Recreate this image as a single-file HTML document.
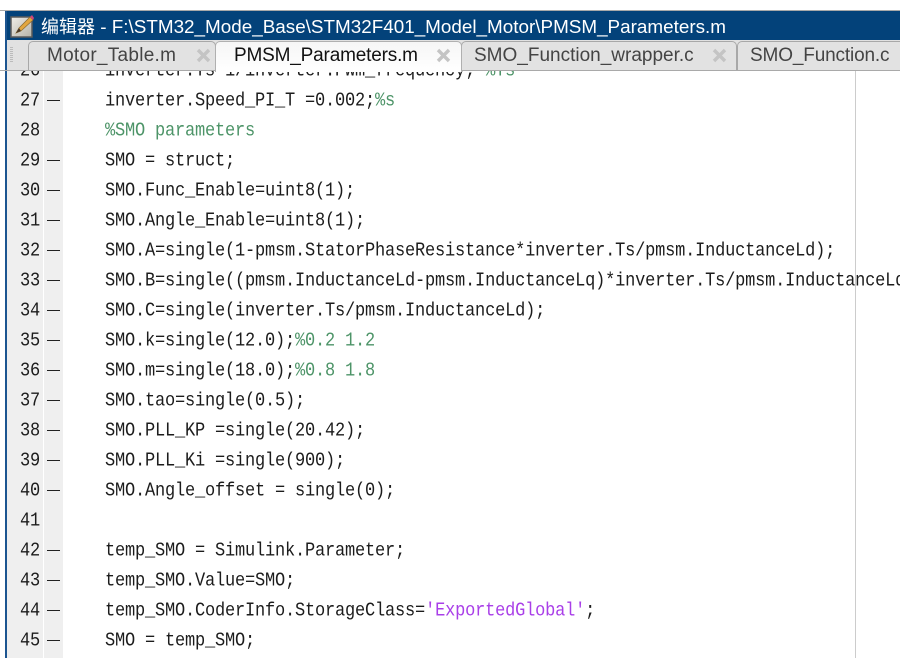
<!DOCTYPE html>
<html><head><meta charset="utf-8">
<style>
html,body{margin:0;padding:0;background:#fff}
#p{position:relative;width:900px;height:658px;overflow:hidden;background:#fff}
#p div{position:absolute}
.l,.n{font-family:"Liberation Mono",monospace;font-size:17px;letter-spacing:-.2px;line-height:30px;height:30px;white-space:pre;color:#1c1c1c;margin-top:2px;transform:scaleY(1.15);transform-origin:50% 50%}
.l{left:105px}
.n{left:20px}
.d{left:47px;width:13px;height:1px;background:#222}
.c{color:#4d9468}
.s{color:#a93fe8}
.t{font-family:"Liberation Sans",sans-serif;font-size:19px;line-height:30px;top:41px;white-space:pre;color:#444}
.tab{top:41px;height:29px;border:1px solid #a8a8a8;border-bottom:none;border-radius:5px 5px 0 0;box-sizing:content-box}
</style></head><body><div id="p">
<div style="left:0;top:10px;width:900px;height:1px;background:#a9a9a9"></div>
<div style="left:5px;top:11px;width:2px;height:647px;background:#1c5590"></div>
<div style="left:7px;top:11px;width:893px;height:29px;background:#03427a"></div>
<svg style="position:absolute;left:10px;top:14px" width="24" height="24" viewBox="0 0 24 24"><defs><linearGradient id="g" x1="0" y1="0" x2="1" y2="1"><stop offset="0" stop-color="#f0eee8"/><stop offset="1" stop-color="#b5b2a8"/></linearGradient></defs><rect x="1" y="3" width="21" height="20" fill="url(#g)" stroke="#5a5a5a" stroke-width="1.5"/><path d="M6 19 L9 14 L20 3 L23 6 L11 17 Z" fill="#e2a63f" stroke="#8a6a30" stroke-width=".7"/><path d="M20 3 L23 6 L24 4 L22 1 Z" fill="#d0457a"/><path d="M6 19 L9 14 L11 17 Z" fill="#4a3a2a"/></svg>
<div style="left:41px;top:12px;height:29px;line-height:29px;color:#fff;font-size:18px;font-family:'Liberation Sans','Noto Sans CJK SC',sans-serif;white-space:pre">编辑器<span style="font-size:18.87px"> - F:\STM32_Mode_Base\STM32F401_Model_Motor\PMSM_Parameters.m</span></div>

<div style="left:7px;top:40px;width:893px;height:30px;background:#e1e1e1"></div>
<div style="left:0;top:70px;width:900px;height:1px;background:#a9a9a9;z-index:3"></div>
<div style="left:10px;top:47px;width:3px;height:16px;background:repeating-linear-gradient(#bbb 0 1px,#e1e1e1 1px 2px)"></div>
<div class="tab" style="left:28px;width:186px;background:#e2e2e2"></div>
<div class="tab" style="left:215px;width:245px;height:30px;background:linear-gradient(#f6f6f6,#fff);z-index:4;border-color:#b0b0b0"></div>
<div class="tab" style="left:461px;width:274px;background:#e2e2e2"></div>
<div class="tab" style="left:737px;width:170px;background:#e2e2e2"></div>
<div class="t" style="left:47px;letter-spacing:.27px">Motor_Table.m</div>
<div class="t" style="left:234px;color:#111;z-index:5;letter-spacing:-.18px">PMSM_Parameters.m</div>
<div class="t" style="left:474px">SMO_Function_wrapper.c</div>
<div class="t" style="left:750px;letter-spacing:-.15px">SMO_Function.c</div>
<svg style="position:absolute;left:196px;top:48px;z-index:5" width="15" height="15"><path d="M2 2L13 13M13 2L2 13" stroke="#c4c4c4" stroke-width="3.4"/></svg>
<svg style="position:absolute;left:436px;top:48px;z-index:5" width="15" height="15"><path d="M2 2L13 13M13 2L2 13" stroke="#c4c4c4" stroke-width="3.4"/></svg>
<svg style="position:absolute;left:712px;top:48px;z-index:5" width="15" height="15"><path d="M2 2L13 13M13 2L2 13" stroke="#c4c4c4" stroke-width="3.4"/></svg>

<div style="left:7px;top:71px;width:36px;height:587px;background:#efefef"></div>
<div style="left:44px;top:71px;width:19px;height:587px;background:#efefef"></div>
<div style="left:855px;top:71px;width:1px;height:587px;background:#ccc"></div>

<div id="e" style="left:0;top:0;width:900px;height:658px;clip-path:inset(71px 0 0 0);z-index:2">
<div class="l" style="top:55px">inverter.Ts=1/inverter.Pwm_frequency; <span class="c">%Ts</span></div><div class="n" style="top:55px">26</div>
<div class="n" style="top:85px">27</div><div class="d" style="top:100px"></div><div class="l" style="top:85px">inverter.Speed_PI_T =0.002;<span class="c">%s</span></div>
<div class="n" style="top:115px">28</div><div class="l c" style="top:115px">%SMO parameters</div>
<div class="n" style="top:145px">29</div><div class="d" style="top:160px"></div><div class="l" style="top:145px">SMO = struct;</div>
<div class="n" style="top:175px">30</div><div class="d" style="top:190px"></div><div class="l" style="top:175px">SMO.Func_Enable=uint8(1);</div>
<div class="n" style="top:205px">31</div><div class="d" style="top:220px"></div><div class="l" style="top:205px">SMO.Angle_Enable=uint8(1);</div>
<div class="n" style="top:235px">32</div><div class="d" style="top:250px"></div><div class="l" style="top:235px">SMO.A=single(1-pmsm.StatorPhaseResistance*inverter.Ts/pmsm.InductanceLd);</div>
<div class="n" style="top:265px">33</div><div class="d" style="top:280px"></div><div class="l" style="top:265px">SMO.B=single((pmsm.InductanceLd-pmsm.InductanceLq)*inverter.Ts/pmsm.InductanceLd);</div>
<div class="n" style="top:295px">34</div><div class="d" style="top:310px"></div><div class="l" style="top:295px">SMO.C=single(inverter.Ts/pmsm.InductanceLd);</div>
<div class="n" style="top:325px">35</div><div class="d" style="top:340px"></div><div class="l" style="top:325px">SMO.k=single(12.0);<span class="c">%0.2 1.2</span></div>
<div class="n" style="top:355px">36</div><div class="d" style="top:370px"></div><div class="l" style="top:355px">SMO.m=single(18.0);<span class="c">%0.8 1.8</span></div>
<div class="n" style="top:385px">37</div><div class="d" style="top:400px"></div><div class="l" style="top:385px">SMO.tao=single(0.5);</div>
<div class="n" style="top:415px">38</div><div class="d" style="top:430px"></div><div class="l" style="top:415px">SMO.PLL_KP =single(20.42);</div>
<div class="n" style="top:445px">39</div><div class="d" style="top:460px"></div><div class="l" style="top:445px">SMO.PLL_Ki =single(900);</div>
<div class="n" style="top:475px">40</div><div class="d" style="top:490px"></div><div class="l" style="top:475px">SMO.Angle_offset = single(0);</div>
<div class="n" style="top:505px">41</div>
<div class="n" style="top:535px">42</div><div class="d" style="top:550px"></div><div class="l" style="top:535px">temp_SMO = Simulink.Parameter;</div>
<div class="n" style="top:565px">43</div><div class="d" style="top:580px"></div><div class="l" style="top:565px">temp_SMO.Value=SMO;</div>
<div class="n" style="top:595px">44</div><div class="d" style="top:610px"></div><div class="l" style="top:595px">temp_SMO.CoderInfo.StorageClass=<span class="s">'ExportedGlobal'</span>;</div>
<div class="n" style="top:625px">45</div><div class="d" style="top:640px"></div><div class="l" style="top:625px">SMO = temp_SMO;</div>
</div>
</div></body></html>
